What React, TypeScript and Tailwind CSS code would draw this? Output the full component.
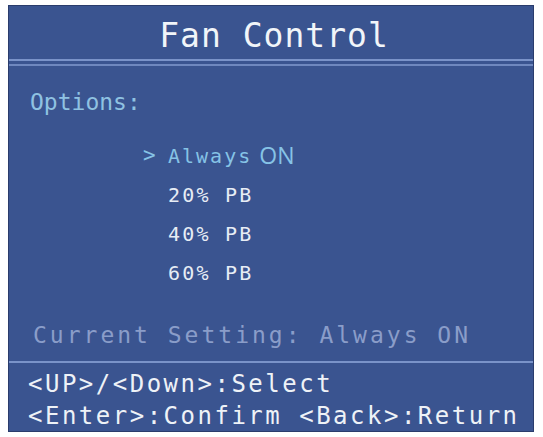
const options = ['Always ON', '20% PB', '40% PB', '60% PB'];

const mono = "font-['DejaVu_Sans_Mono',monospace]";

function OptionRow({ label, selected }: { label: string; selected: boolean }) {
  if (selected) {
    // highlighted entry: the caret and a mixed-font label
    const [word, tail] = label.split(' ');
    return (
      <div className="flex h-[39px] items-center text-[#86c3e6]">
        <span className={`${mono} w-[25px] text-[21px]`}>&gt;</span>
        <span className={`${mono} text-[20px] tracking-[2px]`}>{word}</span>
        <span className="ml-[7px] font-['Open_Sans',sans-serif] text-[23px] leading-none">{tail}</span>
      </div>
    );
  }
  return (
    <div className="flex h-[39px] items-center text-[#e7edf5]">
      <span className="w-[25px]" />
      <span className={`${mono} text-[20px] tracking-[2.2px]`}>{label}</span>
    </div>
  );
}

export default function App() {
  const current = options[0];

  return (
    <div className="h-[437px] w-[543px] bg-white pl-[8px] pt-[5px]">
      <div className="flex h-[427px] w-[526px] flex-col border border-[#2a3c6c] bg-[#3a5490] *:shrink-0">
        {/* title bar */}
        <div className="flex h-[53px] items-center justify-center pl-[6px] pt-[7px]">
          <h1 className={`${mono} text-[33px] tracking-[1px] text-[#f1f5f9]`}>Fan Control</h1>
        </div>
        <div className="h-[2px] bg-[#7a93c9]" />
        <div className="h-[3px]" />
        <div className="h-[2px] bg-[#6f88bf]" />

        {/* option list */}
        <div className="pl-[21px] pt-[22px]">
          <div className={`${mono} text-[23px] leading-[28px] text-[#8fc2e2]`}>Options:</div>
        </div>
        <div className="ml-[134px] mt-[20px] flex flex-col">
          {options.map((o) => (
            <OptionRow key={o} label={o} selected={o === current} />
          ))}
        </div>

        <div className={`${mono} mt-[28px] pl-[24px] text-[23px] leading-[30px] tracking-[3px] text-[#8a9dc9]`}>
          Current Setting: {current}
        </div>

        {/* key help */}
        <div className="mt-[11px] h-[2px] bg-[#7a93c9]" />
        <div className={`${mono} flex flex-col gap-[10px] pl-[19px] pt-[10px] text-[24px] leading-[22px] tracking-[2.5px] text-[#eef2f7]`}>
          <span>&lt;UP&gt;/&lt;Down&gt;:Select</span>
          <span>&lt;Enter&gt;:Confirm &lt;Back&gt;:Return</span>
        </div>
      </div>
    </div>
  );
}
